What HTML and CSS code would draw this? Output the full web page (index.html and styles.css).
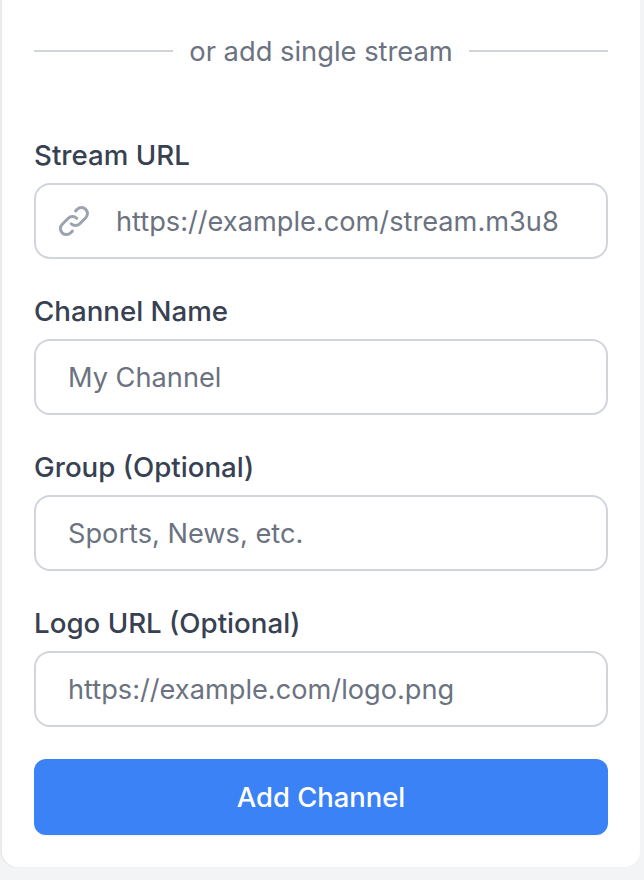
FILE: index.html
```html
<!DOCTYPE html>
<html lang="en">
<head>
    <meta charset="UTF-8">
    <meta name="viewport" content="width=device-width, initial-scale=1.0">
    <title>Add Channel</title>
    <link rel="stylesheet" href="styles.css">
</head>
<body>
    <div class="card">
        <div class="divider">
            <span class="divider-line"></span>
            <span class="divider-text">or add single stream</span>
            <span class="divider-line"></span>
        </div>
        <form class="form">
            <div class="field">
                <label class="label" for="streamUrl">Stream URL</label>
                <div class="input-wrap">
                    <svg class="input-icon" viewBox="0 0 24 24" fill="none" stroke="currentColor" stroke-width="2" stroke-linecap="round" stroke-linejoin="round">
                        <path d="M13.828 10.172a4 4 0 00-5.656 0l-4 4a4 4 0 105.656 5.656l1.102-1.101m-.758-4.899a4 4 0 005.656 0l4-4a4 4 0 00-5.656-5.656l-1.1 1.1"/>
                    </svg>
                    <input class="input input-with-icon" id="streamUrl" type="text" placeholder="https://example.com/stream.m3u8">
                </div>
            </div>
            <div class="field">
                <label class="label" for="channelName">Channel Name</label>
                <input class="input" id="channelName" type="text" placeholder="My Channel">
            </div>
            <div class="field">
                <label class="label" for="group">Group (Optional)</label>
                <input class="input" id="group" type="text" placeholder="Sports, News, etc.">
            </div>
            <div class="field">
                <label class="label" for="logoUrl">Logo URL (Optional)</label>
                <input class="input" id="logoUrl" type="text" placeholder="https://example.com/logo.png">
            </div>
            <button class="button" type="button">Add Channel</button>
        </form>
    </div>
</body>
</html>
```

FILE: styles.css
```css
body {
    font-family: Inter, "Liberation Sans", sans-serif;
    background-color: #f3f4f6;
    margin: 0;
    height: 880px;
    overflow: hidden;
}
.card {
    margin: -32px 4px 0 2px;
    padding: 66px 32px 32px;
    background-color: #fff;
    border-radius: 16px;
    box-shadow: -2px 0 2px rgba(0, 0, 0, 0.05);
}
.divider {
    display: flex;
    align-items: center;
    gap: 16px;
    height: 34px;
    margin-bottom: 67px;
}
.divider-line {
    flex: 1;
    height: 2px;
    background-color: #d1d5db;
}
.divider-text {
    font-size: 27.3px;
    color: #6b7280;
}
.form {
    display: flex;
    flex-direction: column;
    gap: 32px;
}
.field {
    display: flex;
    flex-direction: column;
    gap: 8px;
}
.label {
    font-size: 27.7px;
    line-height: 40px;
    font-weight: 500;
    color: #374151;
}
.input-wrap {
    position: relative;
}
.input-icon {
    position: absolute;
    left: 22px;
    top: 20px;
    width: 36px;
    height: 36px;
    color: #9ca3af;
}
.input {
    box-sizing: border-box;
    width: 100%;
    height: 76px;
    padding: 0 32px;
    font-family: inherit;
    font-size: 27.2px;
    color: #111827;
    background-color: #fff;
    border: 2px solid #d1d5db;
    border-radius: 16px;
}
.input::placeholder {
    color: #6b7280;
}
.input-with-icon {
    padding-left: 80px;
}
.button {
    height: 76px;
    font-family: inherit;
    font-size: 27.4px;
    font-weight: 500;
    color: #fff;
    background-color: #3b82f6;
    border: none;
    border-radius: 12px;
    box-shadow: 0 1px 2px rgba(0, 0, 0, 0.05);
    cursor: pointer;
}
```
